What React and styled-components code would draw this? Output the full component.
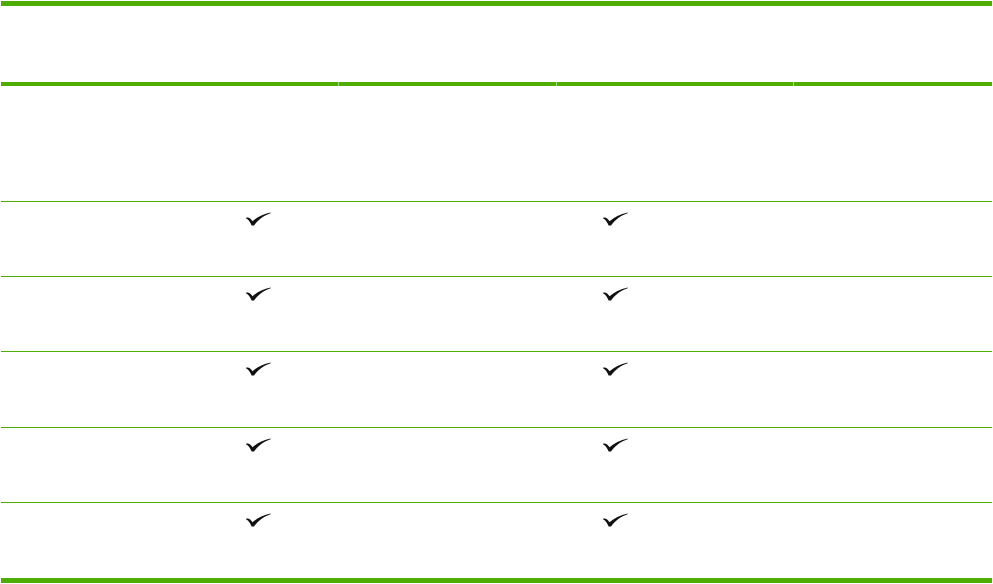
import React from "react";
import styled, { createGlobalStyle } from "styled-components";

const GREEN = "#4dae00";
const LIGHT = "#a9d987";

const Global = createGlobalStyle`
  html, body { margin: 0; padding: 0; background: #fff; }
  body { font-family: "Liberation Sans", Arial, sans-serif; }
`;

const Table = styled.div`
  margin: 1px 0 0 1px;
  width: 991px;
  border-top: 5px solid ${GREEN};
  border-bottom: 5px solid ${GREEN};
  display: flex;
  flex-direction: column;
`;

const COLS = "337px 217px 236px 198px";

const HeaderRow = styled.div`
  display: grid;
  grid-template-columns: ${COLS};
  column-gap: 1px;
  height: 80px;
  background: linear-gradient(to bottom, transparent 76px, ${LIGHT} 76px);
`;

const HeaderCell = styled.div`
  background: #fff;
  border-bottom: 4px solid ${GREEN};
`;

const BodyRow = styled.div`
  display: grid;
  grid-template-columns: ${COLS};
  column-gap: 1px;
  height: ${(p) => p.$h}px;
  border-bottom: ${(p) => (p.$last ? "none" : `1px solid ${GREEN}`)};
`;

const Cell = styled.div`
  padding-top: 10px;
  padding-left: ${(p) => p.$offset || 0}px;
`;

const CheckSvg = styled.svg`
  display: block;
  width: 25px;
  height: 14px;
`;

const Check = () => (
  <CheckSvg viewBox="0 0 25 14">
    <path
      d="M0.2 5.6 C2.6 4.8 4.6 6.2 6.6 9.2 C11 5.2 17 1.8 24.8 0.4 L24.6 1.3 C18 3.4 12 7.8 8 13.6 L5.6 13.6 C4.4 10.2 2.6 7.2 0.2 6.4 Z"
      fill="#111"
    />
  </CheckSvg>
);

const rows = [
  { h: 115, checks: false },
  { h: 74, checks: true },
  { h: 74, checks: true },
  { h: 75, checks: true },
  { h: 74, checks: true },
  { h: 75, checks: true, last: true },
];

export default function App() {
  return (
    <>
      <Global />
      <Table>
        <HeaderRow>
          <HeaderCell />
          <HeaderCell />
          <HeaderCell />
          <HeaderCell />
        </HeaderRow>
        {rows.map((r, i) => (
          <BodyRow key={i} $h={r.h} $last={r.last}>
            <Cell $offset={245}>{r.checks && <Check />}</Cell>
            <Cell />
            <Cell $offset={46}>{r.checks && <Check />}</Cell>
            <Cell />
          </BodyRow>
        ))}
      </Table>
    </>
  );
}
